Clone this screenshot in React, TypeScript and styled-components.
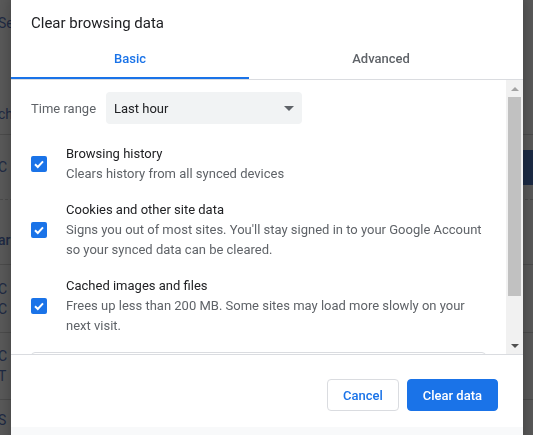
import React from "react";
import styled, { createGlobalStyle } from "styled-components";

const GlobalStyle = createGlobalStyle`
  html, body {
    margin: 0;
    padding: 0;
  }
  body {
    width: 533px;
    height: 435px;
    overflow: hidden;
    background: #5a5a5a;
    font-family: Roboto, "Liberation Sans", Arial, sans-serif;
  }
`;

// dimmed settings page behind the modal
const DimmedPage = styled.div`
  width: 533px;
  height: 435px;
  overflow: hidden;
  display: flex;
  flex-direction: column;
  background: #5a5a5a;
`;

const PageRow = styled.div<{ $h: number; $line?: "solid" | "dashed"; $padTop?: number }>`
  flex: none;
  height: ${(p) => p.$h}px;
  box-sizing: border-box;
  padding-top: ${(p) => p.$padTop ?? 0}px;
  display: flex;
  align-items: center;
  justify-content: space-between;
  border-bottom: ${(p) => (p.$line ? `1px ${p.$line} #4c4c4c` : "none")};
`;

// only the first letters show beside the dialog
const PageText = styled.div<{ $bold?: boolean }>`
  margin-left: -2px;
  font-size: 14px;
  line-height: 20px;
  color: #1f2a44;
  font-weight: ${(p) => (p.$bold ? 500 : 400)};
  white-space: nowrap;
`;

const PageButton = styled.div`
  width: 30px;
  height: 35px;
  border-radius: 4px 0 0 4px;
  background: #1c2b45;
`;

// modal
const Dialog = styled.div`
  position: fixed;
  left: 11px;
  top: -10px;
  width: 512px;
  background: #fff;
  border-radius: 8px;
  overflow: hidden;
  display: flex;
  flex-direction: column;
  box-shadow: 0 4px 16px rgba(0, 0, 0, 0.3);
`;

const Title = styled.h2`
  margin: 0;
  padding: 23px 20px 0;
  font-size: 15px;
  line-height: 20px;
  font-weight: 400;
  color: #202124;
`;

const Tabs = styled.div`
  margin-top: 4px;
  display: grid;
  grid-template-columns: 238px 1fr;
  padding-right: 10px;
  border-bottom: 1px solid #dadce0;
`;

const Tab = styled.div<{ $active?: boolean }>`
  height: 42px;
  box-sizing: border-box;
  padding-top: 2px;
  display: flex;
  align-items: center;
  justify-content: center;
  font-size: 13px;
  font-weight: 500;
  color: ${(p) => (p.$active ? "#1a73e8" : "#5f6368")};
  border-bottom: 2px solid ${(p) => (p.$active ? "#1a73e8" : "transparent")};
`;

const Body = styled.div`
  height: 275px;
  box-sizing: border-box;
  display: flex;
  border-bottom: 1px solid #dadce0;
`;

const ScrollContent = styled.div`
  flex: 1;
  overflow: hidden;
  padding: 12px 20px 0;
`;

const TimeRow = styled.div`
  display: flex;
  align-items: center;
`;

const Label = styled.span`
  width: 75px;
  font-size: 13px;
  color: #5f6368;
`;

const Select = styled.div`
  width: 196px;
  height: 32px;
  box-sizing: border-box;
  padding: 0 8px;
  border-radius: 4px;
  background: #f1f3f4;
  display: flex;
  align-items: center;
  justify-content: space-between;
  font-size: 13px;
  color: #202124;
`;

const Caret = styled.span<{ $dir?: "up" | "down"; $color?: string; $size?: number }>`
  width: 0;
  height: 0;
  border-left: ${(p) => p.$size ?? 5}px solid transparent;
  border-right: ${(p) => p.$size ?? 5}px solid transparent;
  ${(p) =>
    p.$dir === "up"
      ? `border-bottom: ${p.$size ?? 5}px solid ${p.$color ?? "#5f6368"};`
      : `border-top: ${p.$size ?? 5}px solid ${p.$color ?? "#5f6368"};`}
`;

const ItemList = styled.div`
  margin-top: 12px;
`;

const Item = styled.label`
  display: flex;
  align-items: center;
  gap: 19px;
  padding: 8px 0;
`;

const Checkbox = styled.span`
  flex: none;
  width: 16px;
  height: 16px;
  border-radius: 2px;
  background: #1a73e8;
  display: flex;
  align-items: center;
  justify-content: center;
`;

const ItemText = styled.div`
  width: 420px;
  font-size: 13px;
  line-height: 20px;
`;

const ItemTitle = styled.div`
  color: #202124;
`;

const ItemDesc = styled.div`
  color: #5f6368;
`;

const InfoBox = styled.div`
  margin-top: 8px;
  height: 60px;
  border: 1px solid #dadce0;
  border-radius: 4px;
`;

const Scrollbar = styled.div`
  flex: none;
  width: 17px;
  background: #f1f1f1;
  display: flex;
  flex-direction: column;
`;

const ScrollButton = styled.div`
  height: 17px;
  display: flex;
  align-items: center;
  justify-content: center;
`;

const Thumb = styled.div`
  height: 199px;
  margin: 0 2px;
  background: #c1c1c1;
`;

const Track = styled.div`
  flex: 1;
`;

const Footer = styled.div`
  display: flex;
  justify-content: flex-end;
  gap: 8px;
  padding: 24px 25px 16px;
`;

const Button = styled.button<{ $primary?: boolean }>`
  height: 32px;
  padding: 0 15px;
  border-radius: 4px;
  font-family: inherit;
  font-size: 13px;
  font-weight: 500;
  border: 1px solid ${(p) => (p.$primary ? "#1a73e8" : "#dadce0")};
  background: ${(p) => (p.$primary ? "#1a73e8" : "#fff")};
  color: ${(p) => (p.$primary ? "#fff" : "#1a73e8")};
  cursor: pointer;
`;

const SyncArea = styled.div`
  height: 40px;
  background: #f8f9fa;
`;

const Check = () => (
  <svg width="12" height="12" viewBox="0 0 12 12">
    <path d="M2 6.2 L4.8 9 L10 3.4" fill="none" stroke="#fff" strokeWidth="2" />
  </svg>
);

const items = [
  { title: "Browsing history", desc: "Clears history from all synced devices" },
  {
    title: "Cookies and other site data",
    desc: "Signs you out of most sites. You'll stay signed in to your Google Account so your synced data can be cleared.",
  },
  {
    title: "Cached images and files",
    desc: "Frees up less than 200 MB. Some sites may load more slowly on your next visit.",
  },
];

export default function App() {
  return (
    <>
      <GlobalStyle />
      <DimmedPage>
        <PageRow $h={46}>
          <PageText>Se</PageText>
        </PageRow>
        <PageRow $h={39} />
        <PageRow $h={50} $line="solid" $padTop={8}>
          <PageText>ch</PageText>
        </PageRow>
        <PageRow $h={65} $line="dashed">
          <PageText>C</PageText>
          <PageButton />
        </PageRow>
        <PageRow $h={65} $line="solid" $padTop={16}>
          <PageText $bold>ar</PageText>
        </PageRow>
        <PageRow $h={68} $line="solid">
          <PageText>
            C
            <br />C
          </PageText>
        </PageRow>
        <PageRow $h={67} $line="solid">
          <PageText>
            C
            <br />T
          </PageText>
        </PageRow>
        <PageRow $h={40}>
          <PageText>S</PageText>
        </PageRow>
      </DimmedPage>

      <Dialog role="dialog">
        <Title>Clear browsing data</Title>
        <Tabs>
          <Tab $active>Basic</Tab>
          <Tab>Advanced</Tab>
        </Tabs>
        <Body>
          <ScrollContent>
            <TimeRow>
              <Label>Time range</Label>
              <Select>
                Last hour
                <Caret />
              </Select>
            </TimeRow>
            <ItemList>
              {items.map((it) => (
                <Item key={it.title}>
                  <Checkbox>
                    <Check />
                  </Checkbox>
                  <ItemText>
                    <ItemTitle>{it.title}</ItemTitle>
                    <ItemDesc>{it.desc}</ItemDesc>
                  </ItemText>
                </Item>
              ))}
            </ItemList>
            <InfoBox />
          </ScrollContent>
          <Scrollbar>
            <ScrollButton>
              <Caret $dir="up" $color="#a3a3a3" $size={4} />
            </ScrollButton>
            <Thumb />
            <Track />
            <ScrollButton>
              <Caret $color="#505050" $size={4} />
            </ScrollButton>
          </Scrollbar>
        </Body>
        <Footer>
          <Button>Cancel</Button>
          <Button $primary>Clear data</Button>
        </Footer>
        <SyncArea />
      </Dialog>
    </>
  );
}
